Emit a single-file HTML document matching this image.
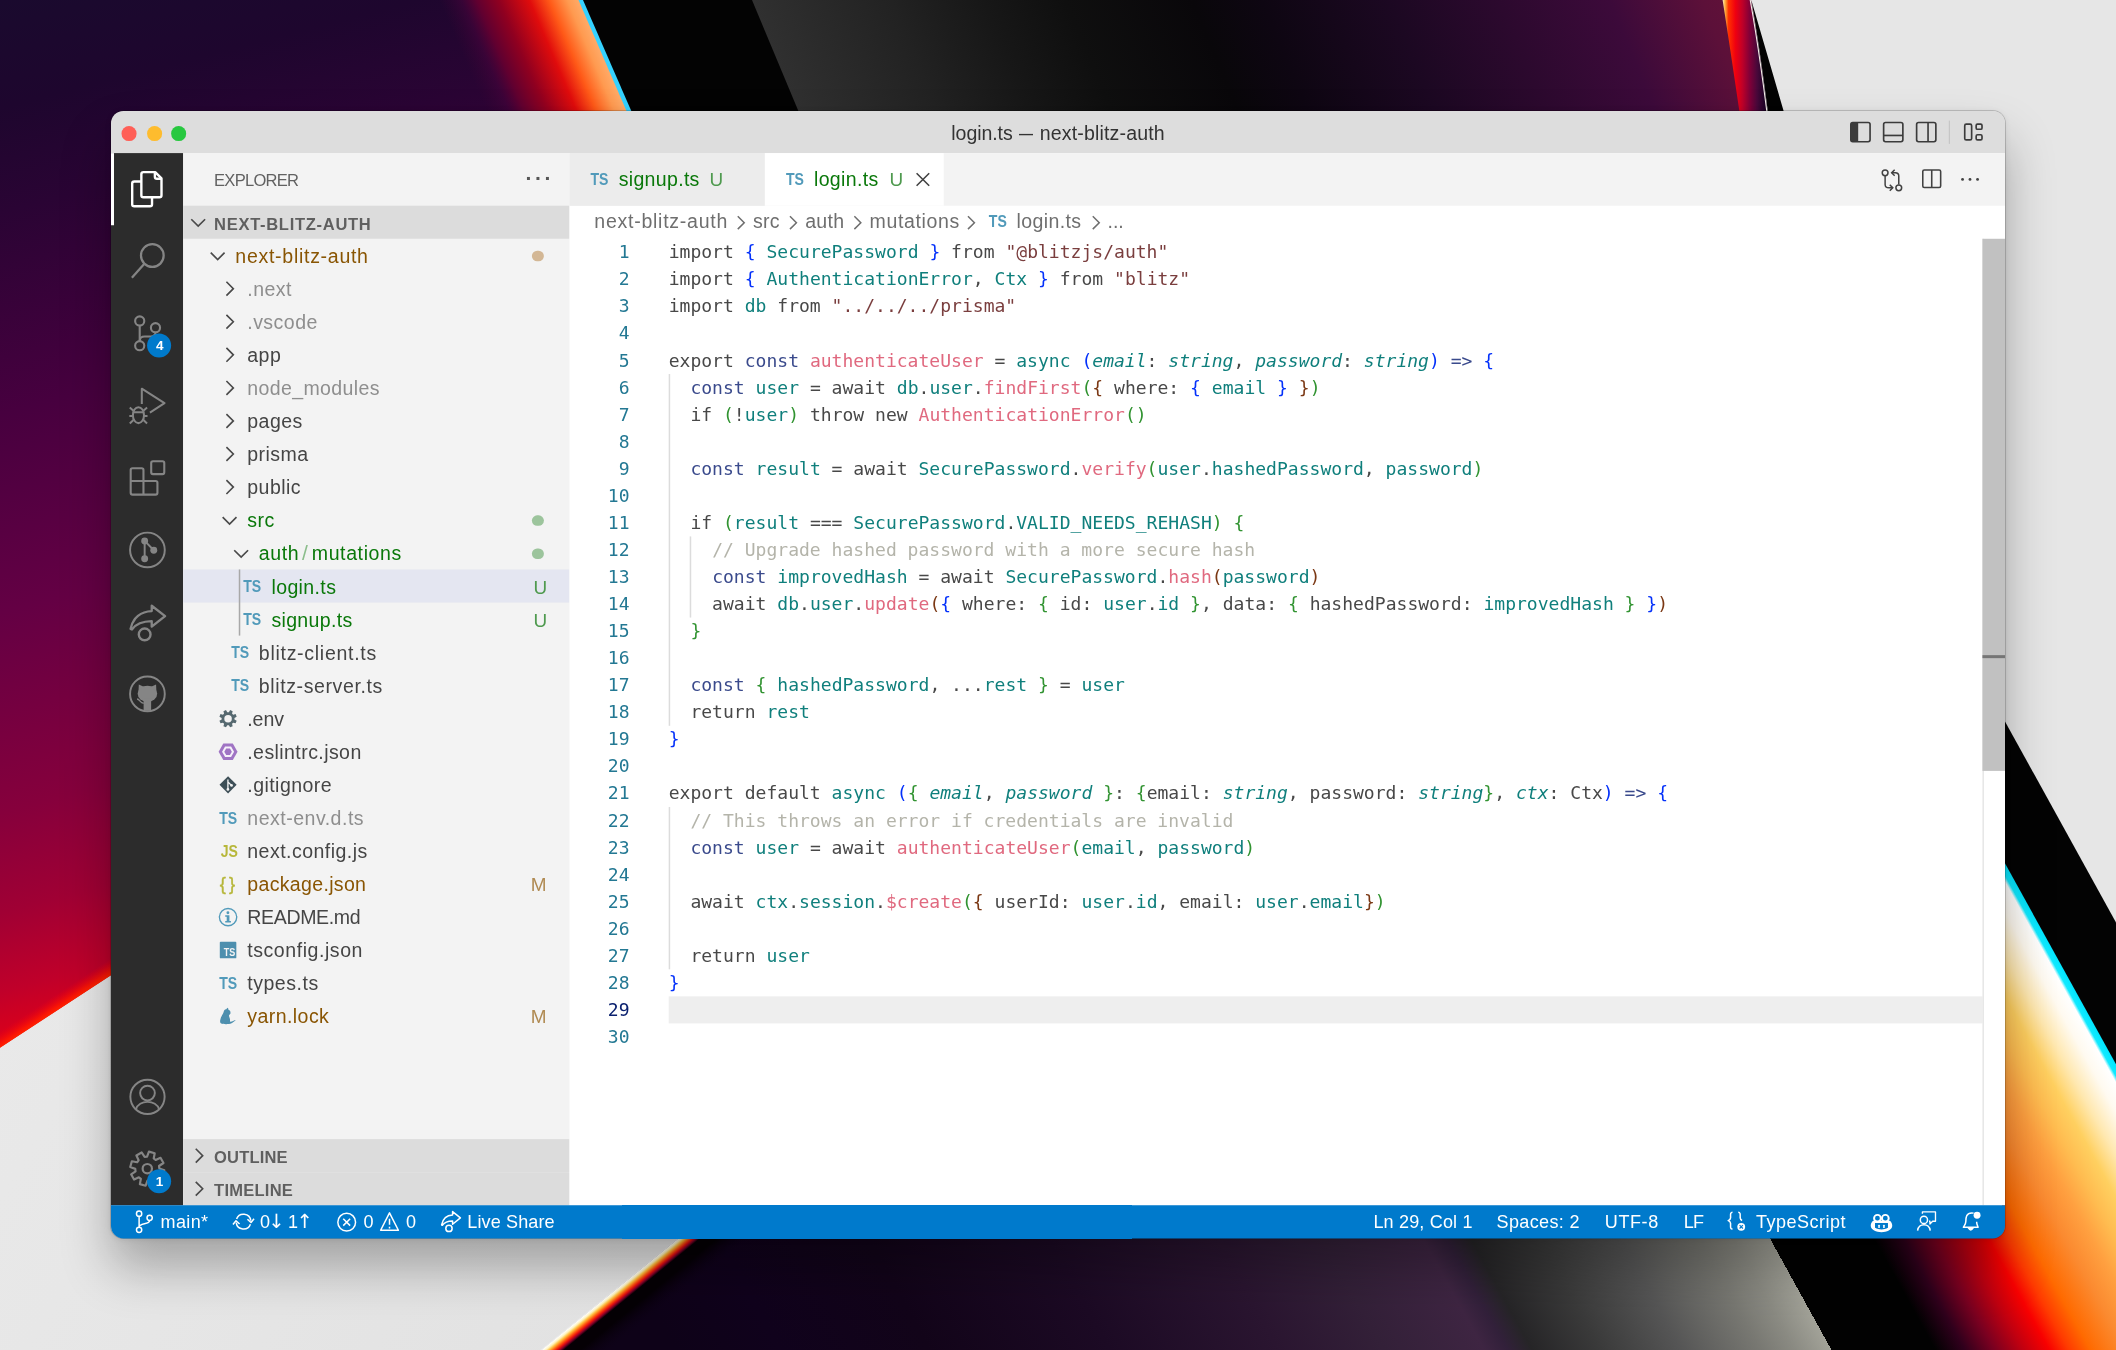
<!DOCTYPE html>
<html lang="en"><head><meta charset="utf-8"><title>login.ts — next-blitz-auth</title>
<style>
*{box-sizing:border-box;margin:0;padding:0}
html,body{width:2116px;height:1350px;overflow:hidden;background:#e6e6e6}
body{position:relative;font-family:"Liberation Sans",sans-serif;-webkit-font-smoothing:antialiased}
.wall{position:absolute;left:0;top:0}
.shadow{position:absolute;left:111px;top:111px;width:1894px;height:1127.4px;border-radius:12.3px;box-shadow:0 30px 50px rgba(0,0,0,.29),0 0 0 1px rgba(0,0,0,.16),0 1px 6px rgba(0,0,0,.10)}
.win{position:absolute;left:111px;top:111px;width:1260px;height:750px;transform:scale(1.50317);transform-origin:0 0;will-change:transform;color:#3b3b3b;font-size:13px}
.abs{position:absolute}
.tb{position:absolute;left:0;top:0;width:1260px;height:28.2px;background:#dddddd;border-radius:8.2px 8.2px 0 0}
.tl{position:absolute;top:10.45px;width:9.9px;height:9.9px;border-radius:50%}
.title{position:absolute;top:0.6px;height:28px;line-height:28px;font-size:13px;color:#333;white-space:nowrap}
.ab{position:absolute;left:0;top:28px;width:48.2px;height:700px;background:#2c2c2c}
.sb{position:absolute;left:48.2px;top:28px;width:256.8px;height:700px;background:#f3f3f3}
.row{position:absolute;left:0;width:256.8px;height:22px;line-height:22px;white-space:nowrap}
.row span.t{position:absolute;top:1px}
.ed{position:absolute;left:305px;top:28px;width:955px;height:700px;background:#fff}
.tabs{position:absolute;left:0;top:0;width:955px;height:35px;background:#f3f3f3}
.tab{position:absolute;top:0.1px;height:35px;line-height:35px;white-space:nowrap}
.bc{position:absolute;left:0;top:35px;width:955px;height:22px;line-height:22.7px;white-space:nowrap;color:#6f6f6f}
.code{position:absolute;left:0;top:57px;width:955px;height:643px;font-family:"DejaVu Sans Mono","Liberation Mono",monospace;font-size:12px;line-height:18px;color:#484848;white-space:pre}
.ln{position:absolute;left:0;margin-top:.3px;width:40px;text-align:right;color:#237893;height:18px}
.cl{position:absolute;left:66px;height:18px;margin-top:.3px}
.st{position:absolute;left:0;top:727.79px;width:1260px;height:22.1px;background:#007acc;color:#fff;font-size:12px;line-height:22px;white-space:nowrap;border-radius:0 0 8.2px 8.2px}
.st span{position:absolute;top:0.6px}
.k{color:#3a4a8c}.t{color:#0f7f7c}.f{color:#e0697f}.s{color:#7a3e3e}.c{color:#b4b4aa}
.b1{color:#0431fa}.b2{color:#319331}.b3{color:#7b3814}
i{font-style:italic}
.tsi{position:absolute;top:0;font-size:10.4px;font-weight:bold;color:#519aba;transform:scaleX(.9);transform-origin:0 50%}
</style></head>
<body>

<svg class="wall" width="2116" height="1350" viewBox="0 0 2116 1350">
<defs>
  <!-- left purple/red field: gradient along normal of bottom edge -->
  <linearGradient id="gL" gradientUnits="userSpaceOnUse" x1="0" y1="0" x2="262.5" y2="1016.4">
    <stop offset="0.0000" stop-color="#1a0a2e"/>
    <stop offset="0.1000" stop-color="#1e062e"/>
    <stop offset="0.1960" stop-color="#2a0434"/>
    <stop offset="0.3810" stop-color="#47003f"/>
    <stop offset="0.5650" stop-color="#640044"/>
    <stop offset="0.7500" stop-color="#86003c"/>
    <stop offset="0.8420" stop-color="#a00034"/>
    <stop offset="0.9150" stop-color="#c0002a"/>
    <stop offset="0.9610" stop-color="#dc001a"/>
    <stop offset="1.0000" stop-color="#f00010"/>
  </linearGradient>
  <linearGradient id="gE" gradientUnits="userSpaceOnUse" x1="0" y1="1048" x2="-7.7" y2="1036.3">
    <stop offset="0" stop-color="#ff2200"/>
    <stop offset="0.25" stop-color="#ff1800" stop-opacity="0.85"/>
    <stop offset="1" stop-color="#f00010" stop-opacity="0"/>
  </linearGradient>
  <!-- glow near slanted top edge -->
  <linearGradient id="gT" gradientUnits="userSpaceOnUse" x1="400" y1="78" x2="583" y2="0">
    <stop offset="0" stop-color="#3a0432" stop-opacity="0"/>
    <stop offset="0.335" stop-color="#3a0432" stop-opacity="0"/>
    <stop offset="0.436" stop-color="#45033a" stop-opacity="0.6"/>
    <stop offset="0.506" stop-color="#600030"/>
    <stop offset="0.611" stop-color="#900020"/>
    <stop offset="0.752" stop-color="#e00c0c"/>
    <stop offset="0.843" stop-color="#ff5a18"/>
    <stop offset="0.928" stop-color="#ff9a50"/>
    <stop offset="1" stop-color="#ffb070"/>
  </linearGradient>
  <!-- grey/purple field at top middle -->
  <linearGradient id="gM" gradientUnits="userSpaceOnUse" x1="752" y1="0" x2="1740" y2="-410">
    <stop offset="0" stop-color="#303030"/>
    <stop offset="0.12" stop-color="#222222"/>
    <stop offset="0.2" stop-color="#171717"/>
    <stop offset="0.27" stop-color="#0f0f0f"/>
    <stop offset="0.38" stop-color="#09070a"/>
    <stop offset="0.44" stop-color="#0e0612"/>
    <stop offset="0.55" stop-color="#1c0822"/>
    <stop offset="0.74" stop-color="#3c0a3a"/>
    <stop offset="0.82" stop-color="#5c1039"/>
    <stop offset="0.9" stop-color="#6a1438"/>
    <stop offset="1" stop-color="#6a1438"/>
  </linearGradient>
  <!-- arc band -->
  <linearGradient id="gA" x1="0" y1="0" x2="1" y2="0">
    <stop offset="0" stop-color="#fff0c0"/>
    <stop offset="0.05" stop-color="#ffb040"/>
    <stop offset="0.12" stop-color="#ff3000"/>
    <stop offset="0.26" stop-color="#f00010"/>
    <stop offset="0.40" stop-color="#c00028"/>
    <stop offset="0.55" stop-color="#800038"/>
    <stop offset="0.70" stop-color="#48083a"/>
    <stop offset="0.85" stop-color="#200428"/>
    <stop offset="1" stop-color="#0c0210"/>
  </linearGradient>
  <!-- right/bottom stripes: along perpendicular of band direction, d in px from cyan line; total 1400 -->
  <linearGradient id="gR" gradientUnits="userSpaceOnUse" x1="2005" y1="862" x2="780" y2="1538.2">
    <stop offset="0.0000" stop-color="#00e5ff"/>
    <stop offset="0.0046" stop-color="#10eaff"/>
    <stop offset="0.0068" stop-color="#ffffff"/>
    <stop offset="0.0170" stop-color="#fffaf0"/>
    <stop offset="0.0321" stop-color="#ffe8b0"/>
    <stop offset="0.0464" stop-color="#ffd060"/>
    <stop offset="0.0607" stop-color="#ffbc50"/>
    <stop offset="0.0757" stop-color="#ffa040"/>
    <stop offset="0.0929" stop-color="#fb8a30"/>
    <stop offset="0.1150" stop-color="#ff6a00"/>
    <stop offset="0.1286" stop-color="#ff3a00"/>
    <stop offset="0.1407" stop-color="#f80000"/>
    <stop offset="0.1571" stop-color="#c00010"/>
    <stop offset="0.1750" stop-color="#7a0020"/>
    <stop offset="0.1936" stop-color="#30001c"/>
    <stop offset="0.2121" stop-color="#020202"/>
    <stop offset="0.2771" stop-color="#020202"/>
    <stop offset="0.2771" stop-color="#a2a298"/>
    <stop offset="0.3000" stop-color="#8a8a82"/>
    <stop offset="0.3214" stop-color="#787872"/>
    <stop offset="0.3714" stop-color="#555555"/>
    <stop offset="0.4214" stop-color="#3a3a3a"/>
    <stop offset="0.4643" stop-color="#262527"/>
    <stop offset="0.4800" stop-color="#32203a"/>
    <stop offset="0.4943" stop-color="#3e2542"/>
    <stop offset="0.5571" stop-color="#332038"/>
    <stop offset="0.6229" stop-color="#2a1530"/>
    <stop offset="0.7286" stop-color="#1c0a24"/>
    <stop offset="0.8414" stop-color="#120419"/>
    <stop offset="0.9350" stop-color="#10021c"/>
    <stop offset="1.0000" stop-color="#0e0218"/>
  </linearGradient>
  <!-- bottom-left diagonal orange line band (perp to line) -->
  <linearGradient id="gD" gradientUnits="userSpaceOnUse" x1="679" y1="1238" x2="706.9" y2="1272.1">
    <stop offset="0" stop-color="#ffffff"/>
    <stop offset="0.05" stop-color="#fff4c0"/>
    <stop offset="0.10" stop-color="#ffc040"/>
    <stop offset="0.16" stop-color="#ff5a10"/>
    <stop offset="0.21" stop-color="#e81010"/>
    <stop offset="0.26" stop-color="#800028"/>
    <stop offset="0.31" stop-color="#050005"/>
    <stop offset="0.55" stop-color="#050005"/>
    <stop offset="1" stop-color="#0e0218" stop-opacity="0"/>
  </linearGradient>
  <linearGradient id="gGreyL" gradientUnits="userSpaceOnUse" x1="0" y1="1000" x2="600" y2="1350">
    <stop offset="0" stop-color="#e9e9e9"/>
    <stop offset="1" stop-color="#e2e2e2"/>
  </linearGradient>
</defs>
<!-- base: light grey (right side + bottom-left) -->
<rect width="2116" height="1350" fill="#e6e6e6"/>
<!-- left purple field -->
<polygon points="0,0 583,0 809.5,519.4 0,1048" fill="url(#gL)"/>
<polygon points="0,0 583,0 809.5,519.4 0,1048" fill="url(#gT)"/>
<polygon points="0,1048 120,969.6 120,950 0,1028" fill="url(#gE)"/>
<!-- cyan sliver + black band at top -->
<polygon points="578.5,0 584,0 632,111 626.5,111" fill="#35d2ff"/>
<polygon points="583,0 1000,0 1000,200 670,200" fill="#030303"/>
<!-- grey/purple field at top middle -->
<polygon points="752,0 1738,0 1762,150 1762,200 835.6,200" fill="url(#gM)"/>
<!-- arc band at top right -->
<path d="M1722.6,0 Q1732,60 1745,150 L1772,150 Q1762,60 1751,0 Z" fill="url(#gA)"/>
<path d="M1750.2,0 Q1761,60 1771.5,150" stroke="#f4f0e8" stroke-width="1.1" fill="none"/>
<path d="M1751.3,0 Q1762,60 1772.5,150 L1795,150 Z" fill="#030303"/>
<!-- bottom-left light grey -->
<polygon points="0,1048 111,975.5 700,975.5 700,1220 540,1350 0,1350" fill="url(#gGreyL)"/>
<!-- right & bottom striped field -->
<polygon points="2005,862 2116,1063 2116,1350 542.3,1350 689,1230 1000,1000 2005,1000" fill="url(#gR)"/>
<polygon points="2000,712.4 2116,922.4 2116,1064.2 2000,854.2" fill="#030303"/>
<!-- diagonal bright edge bottom-left -->
<polygon points="700,1220.8 771,1220.8 612.5,1350 541.5,1350" fill="url(#gD)"/>
</svg>
<div class="shadow"></div>
<div class="win">
<div class="abs" style="left:2px;top:14px;width:1256px;height:724px;background:#f3f3f3"></div>
<div class="tb">
<div class="tl" style="left:6.96px;background:#ff5f57"></div>
<div class="tl" style="left:23.72px;background:#febc2e"></div>
<div class="tl" style="left:40.29px;background:#28c840"></div>
<div class="title" style="left:559.02px;letter-spacing:-0.043px">login.ts</div>
<div class="title" style="left:604.12px;transform:scaleX(.72);transform-origin:0 50%">—</div>
<div class="title" style="left:617.89px;letter-spacing:0.100px">next-blitz-auth</div>
<svg class="abs" style="left:0;top:0" width="1260" height="28" viewBox="0 0 1260 28" fill="none"><rect x="1157.44" y="7.67" width="12.80" height="12.80" rx="1.3" stroke="#3b3b3b" stroke-width="1.1"/><path d="M1157.44,8.97 Q1157.44,7.67 1158.74,7.67 H1162.34 V20.47 H1158.74 Q1157.44,20.47 1157.44,19.17 Z" fill="#3b3b3b"/><rect x="1179.26" y="7.67" width="12.80" height="12.80" rx="1.3" stroke="#3b3b3b" stroke-width="1.1"/><path d="M1179.26,16.27 H1192.06" stroke="#3b3b3b" stroke-width="1.1"/><rect x="1201.21" y="7.67" width="12.80" height="12.80" rx="1.3" stroke="#3b3b3b" stroke-width="1.1"/><path d="M1208.81,7.67 V20.47" stroke="#3b3b3b" stroke-width="1.1"/><path d="M1223.02,6.39 V21.89" stroke="#c6c6c6" stroke-width="0.8"/><rect x="1233.21" y="8.73" width="4.6" height="10.5" rx="1" stroke="#3b3b3b" stroke-width="1.1"/><rect x="1240.81" y="8.73" width="3.9" height="3.4" rx="0.9" stroke="#3b3b3b" stroke-width="1.1"/><rect x="1240.81" y="15.83" width="3.9" height="3.4" rx="0.9" stroke="#3b3b3b" stroke-width="1.1"/></svg>
</div>
<div class="ab"><div class="abs" style="left:0;top:0;width:2px;height:48px;background:#fff"></div><svg class="abs" style="left:0;top:0" width="48.2" height="700" viewBox="0 0 48.2 700" fill="none" stroke-linejoin="round" stroke-linecap="butt"><g stroke="#ffffff" stroke-width="1.6"><path d="M20.2,17.9 V14 Q20.2,12.6 21.6,12.6 H29.4 L33.6,16.8 V27.9 Q33.6,29.3 32.2,29.3 H21.6 Q20.2,29.3 20.2,27.9 V17.9"/><path d="M29.2,12.8 V15.6 Q29.2,17 30.6,17 H33.4"/><path d="M20.2,18.8 H15.5 Q14.1,18.8 14.1,20.2 V33.9 Q14.1,35.3 15.5,35.3 H25.9 Q27.3,35.3 27.3,33.9 V29.3"/></g><g stroke="#858585" stroke-width="1.5"><circle cx="27.5" cy="68.1" r="7.55"/><path d="M22.2,73.5 L13.9,82.9"/></g><g stroke="#858585" stroke-width="1.4"><circle cx="19.1" cy="111.6" r="3.05"/><circle cx="29.6" cy="116.1" r="3.05"/><circle cx="19.1" cy="128.1" r="3.05"/><path d="M19.1,114.7 V125"/><path d="M29.6,119.2 Q29.6,122 26.4,122 H22.4 Q19.1,122 19.1,125"/></g><g stroke="#858585" stroke-width="1.35"><path d="M20.5,166.8 V156.7 L35.6,166.3 L25.9,172.6"/><ellipse cx="18.26" cy="174.3" rx="3.7" ry="5.3"/><path d="M14.7,172.4 H21.8"/><path d="M14.9,171.3 L12.5,169.2 M21.6,171.3 L24,169.2 M14.5,174.8 H12.2 M22,174.8 H24.3 M14.9,177.6 L12.5,179.8 M21.6,177.6 L24,179.8"/></g><g stroke="#858585" stroke-width="1.4"><rect x="26.75" y="204.95" width="8.7" height="8.6" rx="1.2"/><path d="M21.6,218.1 V210.8 Q21.6,209.6 20.4,209.6 H14.3 Q13.1,209.6 13.1,210.8 V226 Q13.1,227.2 14.3,227.2 H29.7 Q30.9,227.2 30.9,226 V219.3 Q30.9,218.1 29.7,218.1 H13.1 M21.6,218.1 V227.2"/></g><g stroke="#858585" stroke-width="1.3"><circle cx="24.24" cy="264" r="11.55"/><path d="M22.4,258 V269.9 M22.4,258 L28.45,264.2"/></g><g fill="#858585" stroke="none"><circle cx="22.4" cy="258" r="2.3"/><circle cx="28.45" cy="264.2" r="2.3"/><circle cx="22.4" cy="269.9" r="2.3"/></g><g stroke="#858585" stroke-width="1.55"><path d="M13,316.6 C14.5,309 20,304.9 27.1,304.7 V301.1 L36,308 L27.1,315 V311.4 C21.5,311.5 16.8,313 13.9,316.9 Z"/><circle cx="22.4" cy="320.2" r="3.9" stroke-width="1.6"/></g><g stroke="#858585" stroke-width="1.3"><circle cx="24.24" cy="359.8" r="11.55"/></g><clipPath id="ghc"><circle cx="24.24" cy="359.8" r="11.2"/></clipPath><g fill="#858585" stroke="none" clip-path="url(#ghc)"><ellipse cx="24.24" cy="359.7" rx="6.5" ry="5.3"/><path d="M18.3,358 L18.5,353.6 L22.2,355.2 Z M30.2,358 L30,353.6 L26.3,355.2 Z"/><rect x="21.7" y="363" width="5" height="9.5"/></g><path d="M17.3,363.2 C19.4,363.2 19,366 21.8,366" stroke="#858585" stroke-width="0.9"/><g stroke="#858585" stroke-width="1.3"><circle cx="24.28" cy="627.9" r="11.4"/><circle cx="24.28" cy="625.4" r="4.9"/><path d="M16.6,636.3 C18.2,629.6 30.4,629.6 32,636.3"/></g><g stroke="#858585" stroke-width="1.45"><path d="M32.15,675.56 L35.50,676.80 L34.42,680.64 L30.91,679.97 L29.91,681.25 L31.39,684.50 L27.92,686.46 L25.91,683.50 L24.29,683.70 L23.05,687.05 L19.21,685.97 L19.88,682.46 L18.60,681.46 L15.35,682.94 L13.39,679.47 L16.35,677.46 L16.15,675.84 L12.80,674.60 L13.88,670.76 L17.39,671.43 L18.39,670.15 L16.91,666.90 L20.38,664.94 L22.39,667.90 L24.01,667.70 L25.25,664.35 L29.09,665.43 L28.42,668.94 L29.70,669.94 L32.95,668.46 L34.91,671.93 L31.95,673.94Z"/><circle cx="24.15" cy="675.7" r="3.1"/></g></svg><div class="abs" style="left:24.40px;top:120.30px;width:16px;height:16px;border-radius:50%;background:#007acc;color:#fff;font-size:9px;font-weight:bold;line-height:16.6px;text-align:center">4</div><div class="abs" style="left:24.33px;top:676.10px;width:16px;height:16px;border-radius:50%;background:#007acc;color:#fff;font-size:9px;font-weight:bold;line-height:16.6px;text-align:center">1</div></div>
<div class="sb">
<div class="abs" style="left:20.39px;top:0.8px;height:35px;line-height:35px;font-size:11px;color:#616161;letter-spacing:-0.487px">EXPLORER</div>
<div class="abs" style="left:227.62px;top:0;height:35px;line-height:33px;font-size:14px;color:#555;letter-spacing:1.6px;font-weight:bold">···</div>
<div class="abs" style="left:0;top:35px;width:256.8px;height:22px;background:#dcdcdc"></div>
<div class="abs" style="left:20.39px;top:35.7px;height:22px;line-height:22px;font-size:11px;font-weight:bold;color:#5f5f5f;letter-spacing:0.463px">NEXT-BLITZ-AUTH</div>
<div class="row" style="top:57px">
<span class="t" style="left:34.56px;color:#895503;letter-spacing:0.469px">next-blitz-auth</span>
<span class="abs" style="left:232.22px;top:7.6px;width:7.3px;height:7.3px;border-radius:50%;background:#d3b795"></span>
</div>
<div class="row" style="top:79px">
<span class="t" style="left:42.48px;color:#8e8e8e;letter-spacing:0.300px">.next</span>
</div>
<div class="row" style="top:101px">
<span class="t" style="left:42.48px;color:#8e8e8e;letter-spacing:0.300px">.vscode</span>
</div>
<div class="row" style="top:123px">
<span class="t" style="left:42.48px;color:#454545;letter-spacing:0.300px">app</span>
</div>
<div class="row" style="top:145px">
<span class="t" style="left:42.48px;color:#8e8e8e;letter-spacing:0.244px">node_modules</span>
</div>
<div class="row" style="top:167px">
<span class="t" style="left:42.48px;color:#454545;letter-spacing:0.300px">pages</span>
</div>
<div class="row" style="top:189px">
<span class="t" style="left:42.48px;color:#454545;letter-spacing:0.300px">prisma</span>
</div>
<div class="row" style="top:211px">
<span class="t" style="left:42.48px;color:#454545;letter-spacing:0.300px">public</span>
</div>
<div class="row" style="top:233px">
<span class="t" style="left:42.48px;color:#0a780a;letter-spacing:0.300px">src</span>
<span class="abs" style="left:232.22px;top:7.6px;width:7.3px;height:7.3px;border-radius:50%;background:#9cc49c"></span>
</div>
<div class="row" style="top:255px">
<span class="t" style="left:50.19px;color:#0a780a;letter-spacing:0.4px">auth<span style="color:#8bbd8b;margin:0 2.2px 0 1.8px;font-size:14px;line-height:0">/</span>mutations</span>
<span class="abs" style="left:232.22px;top:7.6px;width:7.3px;height:7.3px;border-radius:50%;background:#9cc49c"></span>
</div>
<div class="row" style="top:277px;background:#e4e6f1">
<span class="t" style="left:58.57px;color:#0a780a;letter-spacing:0.240px">login.ts</span>
<span class="t" style="left:232.87px;color:#4f9a4f;font-size:12.6px">U</span>
</div>
<div class="row" style="top:299px">
<span class="t" style="left:58.57px;color:#0a780a;letter-spacing:0.206px">signup.ts</span>
<span class="t" style="left:232.87px;color:#4f9a4f;font-size:12.6px">U</span>
</div>
<div class="row" style="top:321px">
<span class="t" style="left:50.19px;color:#454545;letter-spacing:0.465px">blitz-client.ts</span>
</div>
<div class="row" style="top:343px">
<span class="t" style="left:50.19px;color:#454545;letter-spacing:0.395px">blitz-server.ts</span>
</div>
<div class="row" style="top:365px">
<span class="t" style="left:42.48px;color:#454545;letter-spacing:-0.056px">.env</span>
</div>
<div class="row" style="top:387px">
<span class="t" style="left:42.48px;color:#454545;letter-spacing:0.275px">.eslintrc.json</span>
</div>
<div class="row" style="top:409px">
<span class="t" style="left:42.48px;color:#454545;letter-spacing:0.293px">.gitignore</span>
</div>
<div class="row" style="top:431px">
<span class="t" style="left:42.48px;color:#8e8e8e;letter-spacing:0.326px">next-env.d.ts</span>
</div>
<div class="row" style="top:453px">
<span class="t" style="left:42.48px;color:#454545;letter-spacing:0.306px">next.config.js</span>
</div>
<div class="row" style="top:475px">
<span class="t" style="left:42.48px;color:#895503;letter-spacing:0.213px">package.json</span>
<span class="t" style="left:231.08px;color:#b08a52;font-size:12.6px">M</span>
</div>
<div class="row" style="top:497px">
<span class="t" style="left:42.48px;color:#454545;letter-spacing:-0.235px">README.md</span>
</div>
<div class="row" style="top:519px">
<span class="t" style="left:42.48px;color:#454545;letter-spacing:0.362px">tsconfig.json</span>
</div>
<div class="row" style="top:541px">
<span class="t" style="left:42.48px;color:#454545;letter-spacing:0.338px">types.ts</span>
</div>
<div class="row" style="top:563px">
<span class="t" style="left:42.48px;color:#895503;letter-spacing:0.281px">yarn.lock</span>
<span class="t" style="left:231.08px;color:#b08a52;font-size:12.6px">M</span>
</div>
<div class="abs" style="left:36.42px;top:277px;width:0.7px;height:44px;background:#a8a8a8"></div>
<svg class="abs" style="left:0;top:0" width="256.8" height="700" viewBox="0 0 256.8 700"><path d="M34.14,376.84 L35.61,377.68 L34.91,379.38 L33.27,378.94 L32.51,379.70 L32.96,381.33 L31.25,382.04 L30.41,380.57 L29.34,380.57 L28.50,382.04 L26.79,381.33 L27.24,379.70 L26.48,378.94 L24.84,379.38 L24.14,377.68 L25.61,376.84 L25.61,375.76 L24.14,374.92 L24.84,373.22 L26.48,373.66 L27.24,372.90 L26.79,371.27 L28.50,370.56 L29.34,372.03 L30.41,372.03 L31.25,370.56 L32.96,371.27 L32.51,372.90 L33.27,373.66 L34.91,373.22 L35.61,374.92 L34.14,375.76Z M32.38,376.30 A2.5,2.5 0 1 0 27.38,376.30 A2.5,2.5 0 1 0 32.38,376.30Z" fill="#566970" fill-rule="evenodd"/><path d="M23.58,398.30 L26.73,392.84 L33.03,392.84 L36.18,398.30 L33.03,403.76 L26.73,403.76Z" fill="#a074c4"/><path d="M25.88,398.30 L27.88,394.84 L31.88,394.84 L33.88,398.30 L31.88,401.76 L27.88,401.76Z" fill="#f6f1fa"/><path d="M27.38,398.30 L28.63,396.13 L31.13,396.13 L32.38,398.30 L31.13,400.47 L28.63,400.47Z" fill="#a074c4"/><path d="M24.18,420.30 L29.88,414.60 L35.58,420.30 L29.88,426.00Z" fill="#3e4f57"/><path d="M29.78,416.70 V423.30 M29.78,418.30 L32.18,420.70" stroke="#f3f3f3" stroke-width="0.9" fill="none"/><circle cx="29.78" cy="423.30" r="0.9" fill="#f3f3f3"/><circle cx="32.18" cy="420.70" r="0.9" fill="#f3f3f3"/><circle cx="29.88" cy="508.30" r="5.75" fill="none" stroke="#519aba" stroke-width="0.9"/><circle cx="29.78" cy="505.40" r="0.95" fill="#519aba"/><path d="M27.98,507.10 H30.78 V510.80 H31.78 V511.80 H27.98 V510.80 H28.98 V508.10 H27.98Z" fill="#519aba"/><rect x="24.38" y="524.70" width="11" height="11" rx="0.6" fill="#4d8fae"/><path d="M29.75,568.60 C29.53,568.54 29.00,569.29 28.68,569.50 C28.35,569.71 27.76,569.74 27.48,570.10 C27.19,570.46 26.99,571.38 26.68,572.05 C26.36,572.72 25.58,574.01 25.28,574.80 C24.98,575.59 24.58,576.99 24.58,577.60 C24.58,578.21 24.69,578.83 25.28,579.10 C25.86,579.37 27.69,579.53 28.68,579.50 C29.66,579.47 31.29,579.30 32.18,578.90 C33.06,578.50 34.98,576.84 34.88,576.70 C34.78,576.56 32.00,577.97 31.48,577.90 C30.95,577.83 31.32,576.79 31.18,576.20 C31.03,575.61 30.43,574.34 30.48,573.80 C30.52,573.26 31.38,572.86 31.48,572.40 C31.58,571.94 31.36,570.96 31.18,570.60 C30.99,570.24 30.38,570.19 30.18,569.90 C29.97,569.61 29.96,568.66 29.75,568.60 Z" fill="#4d8fae"/></svg><span class="tsi" style="left:40.07px;top:278.00px;line-height:22px">TS</span><span class="tsi" style="left:40.07px;top:300.00px;line-height:22px">TS</span><span class="tsi" style="left:31.69px;top:322.00px;line-height:22px">TS</span><span class="tsi" style="left:31.69px;top:344.00px;line-height:22px">TS</span><span class="tsi" style="left:23.98px;top:432.00px;line-height:22px">TS</span><span class="tsi" style="left:25.08px;top:454.00px;line-height:22px;color:#b7b73b">JS</span><span class="abs" style="left:24.08px;top:474.60px;line-height:22px;font-size:12.2px;color:#b7b73b;letter-spacing:2.2px;-webkit-text-stroke:0.25px #b7b73b">{}</span><span class="abs" style="left:26.98px;top:526.00px;line-height:11px;font-size:7.5px;font-weight:bold;color:#f3f3f3;transform:scaleX(.8);transform-origin:0 50%">TS</span><span class="tsi" style="left:23.98px;top:542.00px;line-height:22px">TS</span>
<div class="abs" style="left:0;top:656px;width:256.8px;height:22px;background:#dcdcdc"></div>
<div class="abs" style="left:20.39px;top:656.7px;height:22px;line-height:22px;font-size:11px;font-weight:bold;color:#5f5f5f;letter-spacing:0.108px">OUTLINE</div>
<div class="abs" style="left:0;top:678px;width:256.8px;height:22px;background:#dcdcdc"></div>
<div class="abs" style="left:20.39px;top:678.7px;height:22px;line-height:22px;font-size:11px;font-weight:bold;color:#5f5f5f;letter-spacing:0.153px">TIMELINE</div>
<svg class="abs" style="left:0;top:0" width="256.8" height="700" viewBox="0 0 256.8 700"><path d="M5.41,44.00 L10.01,48.60 L14.61,44.00" fill="none" stroke="#4a4a4a" stroke-width="1.1"/><path d="M18.36,66.20 L22.96,70.80 L27.56,66.20" fill="none" stroke="#4a4a4a" stroke-width="1.1"/><path d="M28.78,85.60 L33.38,90.20 L28.78,94.80" fill="none" stroke="#4a4a4a" stroke-width="1.1"/><path d="M28.78,107.60 L33.38,112.20 L28.78,116.80" fill="none" stroke="#4a4a4a" stroke-width="1.1"/><path d="M28.78,129.60 L33.38,134.20 L28.78,138.80" fill="none" stroke="#4a4a4a" stroke-width="1.1"/><path d="M28.78,151.60 L33.38,156.20 L28.78,160.80" fill="none" stroke="#4a4a4a" stroke-width="1.1"/><path d="M28.78,173.60 L33.38,178.20 L28.78,182.80" fill="none" stroke="#4a4a4a" stroke-width="1.1"/><path d="M28.78,195.60 L33.38,200.20 L28.78,204.80" fill="none" stroke="#4a4a4a" stroke-width="1.1"/><path d="M28.78,217.60 L33.38,222.20 L28.78,226.80" fill="none" stroke="#4a4a4a" stroke-width="1.1"/><path d="M26.28,242.20 L30.88,246.80 L35.48,242.20" fill="none" stroke="#4a4a4a" stroke-width="1.1"/><path d="M33.99,264.20 L38.59,268.80 L43.19,264.20" fill="none" stroke="#4a4a4a" stroke-width="1.1"/><path d="M8.38,662.40 L12.98,667.00 L8.38,671.60" fill="none" stroke="#4a4a4a" stroke-width="1.1"/><path d="M8.38,684.40 L12.98,689.00 L8.38,693.60" fill="none" stroke="#4a4a4a" stroke-width="1.1"/></svg>
</div>
<div class="ed">
<div class="tabs">
<div class="abs" style="left:0;top:0;width:129.81px;height:35px;background:#ececec"></div>
<div class="abs" style="left:129.81px;top:0;width:119.48px;height:35px;background:#fff"></div>
<div class="tab" style="left:0;width:300px"><span class="tsi" style="left:13.99px;line-height:35px;color:#519aba">TS</span><span class="abs" style="left:32.75px;color:#0a780a;letter-spacing:0.206px">signup.ts</span><span class="abs" style="left:93.09px;color:#4f9a4f;font-size:12.6px;top:.6px">U</span></div>
<div class="tab" style="left:0;width:400px"><span class="tsi" style="left:143.85px;line-height:35px;color:#519aba">TS</span><span class="abs" style="left:162.68px;color:#0a780a;letter-spacing:0.215px">login.ts</span><span class="abs" style="left:212.84px;color:#4f9a4f;font-size:12.6px;top:.6px">U</span></div>
<svg class="abs" style="left:0;top:0" width="955" height="35" viewBox="0 0 955 35" fill="none" stroke-linecap="butt" stroke-linejoin="miter"><path d="M230.93,13.37 L239.32,21.75 M239.32,13.37 L230.93,21.75" stroke="#424242" stroke-width="1.05"/><circle cx="875.25" cy="13.09" r="1.92" stroke="#424242" stroke-width="1"/><circle cx="884.34" cy="23.07" r="1.92" stroke="#424242" stroke-width="1"/><path d="M875.25,15.31 L875.25,20.85 Q875.25,23.07 877.76,23.07 L880.35,23.07" stroke="#424242" stroke-width="1"/><path d="M878.35,21.07 L880.35,23.07 L878.35,25.07" stroke="#424242" stroke-width="1"/><path d="M884.34,20.85 L884.34,15.31 Q884.34,13.09 882.05,13.09 L879.61,13.09" stroke="#424242" stroke-width="1"/><path d="M881.60,11.10 L879.61,13.09 L881.60,15.09" stroke="#424242" stroke-width="1"/><rect x="900.30" y="11.24" width="11.90" height="11.68" rx="1" stroke="#424242" stroke-width="1.05"/><path d="M906.26,11.24 V22.92" stroke="#424242" stroke-width="1.05"/><circle cx="926.77" cy="17.53" r="0.95" fill="#424242"/><circle cx="931.72" cy="17.53" r="0.95" fill="#424242"/><circle cx="936.75" cy="17.53" r="0.95" fill="#424242"/></svg>
</div>
<div class="bc">
<span class="abs" style="left:16.52px;letter-spacing:0.486px">next-blitz-auth</span>
<span class="abs" style="left:122.10px;letter-spacing:0.167px">src</span>
<span class="abs" style="left:156.82px;letter-spacing:0.177px">auth</span>
<span class="abs" style="left:199.67px;letter-spacing:0.420px">mutations</span>
<span class="tsi" style="left:278.90px;line-height:22px;color:#519aba">TS</span>
<span class="abs" style="left:297.39px;letter-spacing:0.256px">login.ts</span>
<span class="abs" style="left:357.93px;letter-spacing:0">...</span>
<svg class="abs" style="left:0;top:0" width="955" height="22"><path d="M111.96,7.00 L116.26,11.30 L111.96,15.60" fill="none" stroke="#6f6f6f" stroke-width="1.0"/><path d="M146.69,7.00 L150.99,11.30 L146.69,15.60" fill="none" stroke="#6f6f6f" stroke-width="1.0"/><path d="M189.53,7.00 L193.83,11.30 L189.53,15.60" fill="none" stroke="#6f6f6f" stroke-width="1.0"/><path d="M265.11,7.00 L269.41,11.30 L265.11,15.60" fill="none" stroke="#6f6f6f" stroke-width="1.0"/><path d="M348.13,7.00 L352.43,11.30 L348.13,15.60" fill="none" stroke="#6f6f6f" stroke-width="1.0"/></svg>
</div>
<div class="code">
<div class="abs" style="left:66px;top:504px;width:873.8px;height:18px;background:#eeeeee"></div>
<div class="ln" style="top:0px">1</div><div class="cl" style="top:0px">import <span class="b1">{</span> <span class="t">SecurePassword</span> <span class="b1">}</span> from <span class="s">&quot;@blitzjs/auth&quot;</span></div>
<div class="ln" style="top:18px">2</div><div class="cl" style="top:18px">import <span class="b1">{</span> <span class="t">AuthenticationError</span>, <span class="t">Ctx</span> <span class="b1">}</span> from <span class="s">&quot;blitz&quot;</span></div>
<div class="ln" style="top:36px">3</div><div class="cl" style="top:36px">import <span class="t">db</span> from <span class="s">&quot;../../../prisma&quot;</span></div>
<div class="ln" style="top:54px">4</div><div class="cl" style="top:54px"></div>
<div class="ln" style="top:72px">5</div><div class="cl" style="top:72px">export <span class="k">const</span> <span class="f">authenticateUser</span> = <span class="t">async</span> <span class="b1">(</span><i class="t">email</i>: <i class="t">string</i>, <i class="t">password</i>: <i class="t">string</i><span class="b1">)</span> <span class="k">=&gt;</span> <span class="b1">{</span></div>
<div class="ln" style="top:90px">6</div><div class="cl" style="top:90px">  <span class="k">const</span> <span class="t">user</span> = await <span class="t">db</span>.<span class="t">user</span>.<span class="f">findFirst</span><span class="b2">(</span><span class="b3">{</span> where: <span class="b1">{</span> <span class="t">email</span> <span class="b1">}</span> <span class="b3">}</span><span class="b2">)</span></div>
<div class="ln" style="top:108px">7</div><div class="cl" style="top:108px">  if <span class="b2">(</span>!<span class="t">user</span><span class="b2">)</span> throw new <span class="f">AuthenticationError</span><span class="b2">()</span></div>
<div class="ln" style="top:126px">8</div><div class="cl" style="top:126px"></div>
<div class="ln" style="top:144px">9</div><div class="cl" style="top:144px">  <span class="k">const</span> <span class="t">result</span> = await <span class="t">SecurePassword</span>.<span class="f">verify</span><span class="b2">(</span><span class="t">user</span>.<span class="t">hashedPassword</span>, <span class="t">password</span><span class="b2">)</span></div>
<div class="ln" style="top:162px">10</div><div class="cl" style="top:162px"></div>
<div class="ln" style="top:180px">11</div><div class="cl" style="top:180px">  if <span class="b2">(</span><span class="t">result</span> === <span class="t">SecurePassword</span>.<span class="t">VALID_NEEDS_REHASH</span><span class="b2">)</span> <span class="b2">{</span></div>
<div class="ln" style="top:198px">12</div><div class="cl" style="top:198px">    <span class="c">// Upgrade hashed password with a more secure hash</span></div>
<div class="ln" style="top:216px">13</div><div class="cl" style="top:216px">    <span class="k">const</span> <span class="t">improvedHash</span> = await <span class="t">SecurePassword</span>.<span class="f">hash</span><span class="b3">(</span><span class="t">password</span><span class="b3">)</span></div>
<div class="ln" style="top:234px">14</div><div class="cl" style="top:234px">    await <span class="t">db</span>.<span class="t">user</span>.<span class="f">update</span><span class="b3">(</span><span class="b1">{</span> where: <span class="b2">{</span> id: <span class="t">user</span>.<span class="t">id</span> <span class="b2">}</span>, data<span>:</span> <span class="b2">{</span> hashedPassword: <span class="t">improvedHash</span> <span class="b2">}</span> <span class="b1">}</span><span class="b3">)</span></div>
<div class="ln" style="top:252px">15</div><div class="cl" style="top:252px">  <span class="b2">}</span></div>
<div class="ln" style="top:270px">16</div><div class="cl" style="top:270px"></div>
<div class="ln" style="top:288px">17</div><div class="cl" style="top:288px">  <span class="k">const</span> <span class="b2">{</span> <span class="t">hashedPassword</span>, ...<span class="t">rest</span> <span class="b2">}</span> = <span class="t">user</span></div>
<div class="ln" style="top:306px">18</div><div class="cl" style="top:306px">  return <span class="t">rest</span></div>
<div class="ln" style="top:324px">19</div><div class="cl" style="top:324px"><span class="b1">}</span></div>
<div class="ln" style="top:342px">20</div><div class="cl" style="top:342px"></div>
<div class="ln" style="top:360px">21</div><div class="cl" style="top:360px">export default <span class="t">async</span> <span class="b1">(</span><span class="b2">{</span> <i class="t">email</i>, <i class="t">password</i> <span class="b2">}</span>: <span class="b2">{</span>email: <i class="t">string</i>, password: <i class="t">string</i><span class="b2">}</span>, <i class="t">ctx</i>: Ctx<span class="b1">)</span> <span class="k">=&gt;</span> <span class="b1">{</span></div>
<div class="ln" style="top:378px">22</div><div class="cl" style="top:378px">  <span class="c">// This throws an error if credentials are invalid</span></div>
<div class="ln" style="top:396px">23</div><div class="cl" style="top:396px">  <span class="k">const</span> <span class="t">user</span> = await <span class="f">authenticateUser</span><span class="b2">(</span><span class="t">email</span>, <span class="t">password</span><span class="b2">)</span></div>
<div class="ln" style="top:414px">24</div><div class="cl" style="top:414px"></div>
<div class="ln" style="top:432px">25</div><div class="cl" style="top:432px">  await <span class="t">ctx</span>.<span class="t">session</span>.<span class="f">$create</span><span class="b2">(</span><span class="b3">{</span> userId: <span class="t">user</span>.<span class="t">id</span>, email: <span class="t">user</span>.<span class="t">email</span><span class="b3">}</span><span class="b2">)</span></div>
<div class="ln" style="top:450px">26</div><div class="cl" style="top:450px"></div>
<div class="ln" style="top:468px">27</div><div class="cl" style="top:468px">  return <span class="t">user</span></div>
<div class="ln" style="top:486px">28</div><div class="cl" style="top:486px"><span class="b1">}</span></div>
<div class="ln" style="top:504px;color:#0b216f">29</div><div class="cl" style="top:504px"></div>
<div class="ln" style="top:522px">30</div><div class="cl" style="top:522px"></div>
<div class="abs" style="left:66.00px;top:90px;width:0.7px;height:234px;background:#dcdcdc"></div>
<div class="abs" style="left:80.45px;top:198px;width:0.7px;height:54px;background:#dcdcdc"></div>
<div class="abs" style="left:66.00px;top:378px;width:0.7px;height:108px;background:#dcdcdc"></div>
<div class="abs" style="left:939.8px;top:0;width:15.2px;height:643px;border-left:0.7px solid #e6e6e6"></div>
<div class="abs" style="left:939.8px;top:0;width:15.2px;height:354.07px;background:#c1c1c1"></div>
<div class="abs" style="left:940.2px;top:277.10px;width:14.8px;height:1.8px;background:#757575"></div>
</div>
</div>
<div class="st">
<span style="left:33.00px;letter-spacing:0.224px">main*</span>
<span style="left:99.06px">0<span style="position:static;font-family:'DejaVu Sans',sans-serif;font-size:13px;line-height:0;margin:0 -1.1px">↓</span> 1<span style="position:static;font-family:'DejaVu Sans',sans-serif;font-size:13px;line-height:0;margin:0 -1.1px">↑</span></span>
<span style="left:167.91px;letter-spacing:0.000px">0</span>
<span style="left:196.19px;letter-spacing:0.000px">0</span>
<span style="left:237.03px;letter-spacing:0.084px">Live Share</span>
<span style="left:839.83px;letter-spacing:0.107px">Ln 29, Col 1</span>
<span style="left:921.79px;letter-spacing:0.228px">Spaces: 2</span>
<span style="left:993.77px;letter-spacing:0.386px">UTF-8</span>
<span style="left:1046.26px;letter-spacing:-0.449px">LF</span>
<span style="left:1094.42px;letter-spacing:0.312px">TypeScript</span>
<svg class="abs" style="left:0;top:0" width="1260" height="22" viewBox="0 0 1260 22" fill="none" stroke="#fff" stroke-width="1" stroke-linejoin="round"><circle cx="18.70" cy="5.6" r="1.75"/><circle cx="18.70" cy="16.3" r="1.75"/><circle cx="25.70" cy="8.3" r="1.75"/><path d="M18.70,7.4 V14.5 M25.70,10.1 C25.70,13 18.70,11.5 18.70,14.5"/><path d="M83.54,9.17 A4.9,4.9 0 0 1 93.00,10.17 M92.75,12.53 A4.9,4.9 0 0 1 83.29,11.53"/><path d="M90.75,9.25 L93.15,11.45 L95.15,8.95 M85.55,12.45 L83.15,10.25 L81.15,12.75"/><circle cx="156.80" cy="11.2" r="5.9"/><path d="M154.50,8.9 L159.10,13.5 M159.10,8.9 L154.50,13.5"/><path d="M185.28,5 L191.18,16.6 H179.38Z"/><path d="M185.28,9 V13 M185.28,14.2 V15.4"/><path d="M219.94,13.1 C220.84,8.6 223.74,6.6 227.24,6.5 V4.2 L232.44,8.4 L227.24,12.6 V10.4 C224.14,10.4 221.84,11.2 220.44,13.3Z"/><circle cx="224.84" cy="15.4" r="2.1"/><path d="M1078.73,4.6 C1076.93,4.6 1077.53,6.6 1077.43,8.4 C1077.33,9.6 1076.53,10 1075.83,10.2 C1076.53,10.4 1077.33,10.8 1077.43,12 C1077.53,13.8 1076.93,15.8 1078.73,15.8"/><path d="M1082.53,4.6 C1084.33,4.6 1083.73,6.6 1083.83,8.4 C1083.93,9.4 1084.33,9.8 1085.13,10.1"/><circle cx="1084.53" cy="14.3" r="2.6" fill="#fff" stroke="none"/><path d="M1083.43,13.2 L1085.63,15.4 M1085.63,13.2 L1083.43,15.4" stroke="#007acc" stroke-width="0.8"/><circle cx="1175.14" cy="8.6" r="2.25" stroke-width="1.3"/><circle cx="1180.39" cy="8.6" r="2.25" stroke-width="1.3"/><path fill="#fff" stroke="none" fill-rule="evenodd" d="M1172.24,10.3 C1171.24,11.2 1170.69,12.3 1170.69,13.6 C1170.69,16.2 1174.44,17.9 1177.84,17.9 C1181.24,17.9 1184.99,16.2 1184.99,13.6 C1184.99,12.3 1184.44,11.2 1183.44,10.3 Z M1173.54,11.7 V15 C1174.84,15.8 1176.44,16.1 1177.84,16.1 C1179.24,16.1 1180.84,15.8 1182.14,15 V11.7 Z"/><rect x="1175.69" y="12.9" width="1.05" height="2.2" rx="0.4" fill="#fff" stroke="none"/><rect x="1178.94" y="12.9" width="1.05" height="2.2" rx="0.4" fill="#fff" stroke="none"/><circle cx="1206.06" cy="9.7" r="2.4"/><path d="M1201.86,16.8 C1202.46,11.6 1209.66,11.6 1210.26,16.8"/><path d="M1205.06,5.6 V4.4 H1213.76 V10.6 H1211.86 L1210.06,12.4 V10.6 H1209.46" stroke-width="0.9"/><path d="M1239.12,5.2 C1233.92,4.4 1233.92,8.6 1233.92,11 C1233.92,12.6 1232.72,13.8 1232.32,14.6 H1242.12 C1241.72,13.8 1241.12,12.8 1241.12,11"/><path d="M1235.72,15.2 Q1237.22,17.6 1238.72,15.2Z" fill="#fff"/><circle cx="1241.42" cy="6.6" r="2.3" fill="#fff" stroke="none"/></svg>
</div>
</div>
</body></html>
